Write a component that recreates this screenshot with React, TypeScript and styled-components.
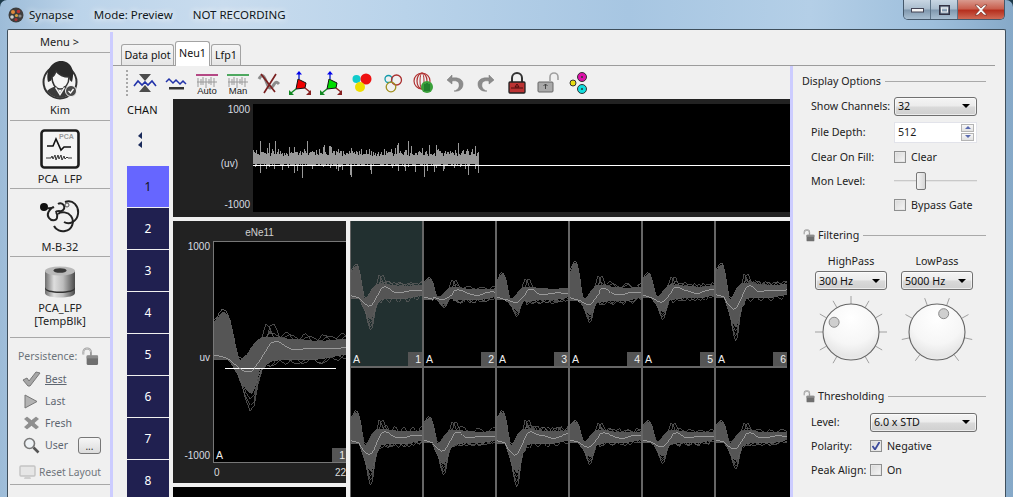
import React from "react";
import styled, { createGlobalStyle } from "styled-components";

const Global = createGlobalStyle`
  html, body { margin: 0; padding: 0; background: #1d3a4a; overflow: hidden; }
  * { box-sizing: border-box; }
`;

const UI_FONT = `"Noto Sans", "Open Sans", sans-serif`;
const PLOT_FONT = `"Liberation Sans", Arial, sans-serif`;

/* ---------- window ---------- */
const Win = styled.div`
  width: 1013px; height: 497px; overflow: hidden; display: flex; flex-direction: column;
  border-radius: 7px 7px 0 0; font-family: ${UI_FONT}; font-size: 11px; color: #1c1c1c;
  background: linear-gradient(90deg, #9dbcd8 0%, #bcd4ea 8%, #c9dcee 22%, #b9d3ea 40%, #a7c6e2 62%, #b4cfe7 80%, #9ebfdc 92%, #86a9c8 100%);
`;
const TitleBar = styled.header`
  height: 29px; flex: none; display: flex; align-items: center; gap: 20px; padding: 0 8px 0 8px;
`;
const TitleBrand = styled.div`display: flex; align-items: center; gap: 5px;`;
const TitleText = styled.span`
  font-size: 11.5px; color: #101820; line-height: 16px; margin-top: 1px;
  text-shadow: 0 0 6px rgba(255,255,255,.95), 0 0 10px rgba(255,255,255,.7);
`;
const Caption = styled.div`
  margin-left: auto; align-self: flex-start; display: flex; width: 102px; height: 20px;
  border: 1px solid #44586b; border-top: none; border-radius: 0 0 5px 5px; overflow: hidden;
`;
const CapBtn = styled.div<{ $w: number; $close?: boolean }>`
  width: ${p => p.$w}px; display: flex; align-items: center; justify-content: center;
  border-right: 1px solid #5d7387;
  background: ${p => p.$close
    ? "linear-gradient(180deg,#d99a8e 0%,#c9604f 45%,#b6301f 55%,#cf6a55 100%)"
    : "linear-gradient(180deg,#c8d6e3 0%,#a9bccd 48%,#7f97ad 52%,#a9bfd2 100%)"};
  &:last-child { border-right: none; }
`;
const Client = styled.div`
  flex: 1; margin: 0 7px; min-height: 0; display: flex; background: #f0f0f0;
  border: 1px solid #3f4f5c; border-bottom: none; border-radius: 2px 2px 0 0;
`;

/* ---------- sidebar ---------- */
const Side = styled.aside`width: 102px; flex: none; padding-left: 2px; display: flex; flex-direction: column;`;
const MenuRow = styled.div`
  height: 23px; flex: none; display: flex; align-items: center; justify-content: center; border-bottom: 1px solid #a8a8a8;
  font-size: 11px; color: #222; padding-right: 1px;
`;
const NavItem = styled.div<{ $h: number; $pad: number }>`
  height: ${p => p.$h}px; flex: none; display: flex; flex-direction: column; align-items: center; justify-content: flex-start;
  padding-top: ${p => p.$pad}px; border-bottom: 1px solid #a8a8a8; text-align: center;
`;
const NavLabel = styled.div`font-size: 11px; line-height: 13px; color: #222; margin-top: 3px;`;
const Persist = styled.div`
  flex: none; padding-top: 6px; height: 147px; border-bottom: 1px solid #a8a8a8; color: #5e6670;
  display: flex; flex-direction: column;
`;
const PersistHead = styled.div`height: 24px; display: flex; align-items: center; gap: 3px; padding-left: 8px; font-size: 10.5px; color: #6c737a;`;
const PersistRow = styled.div`height: 22px; display: flex; align-items: center; padding-left: 11px; gap: 4px; font-size: 10.5px;`;
const IconSlot = styled.span`width: 20px; display: flex; justify-content: center;`;
const PersistLabel = styled.span<{ $on?: boolean }>`
  text-decoration: ${p => p.$on ? "underline" : "none"};
`;
const DotsBtn = styled.span`
  width: 23px; height: 17px; margin-left: 6px; border: 1px solid #777; border-radius: 3px; display: flex; align-items: flex-end; justify-content: center;
  background: linear-gradient(180deg,#f6f6f6,#dcdcdc); font-size: 10px; line-height: 13px; color: #333;
`;
const ResetRow = styled(PersistRow)`margin-top: 5px; padding-left: 7px; gap: 2px; color: #70767c; font-size: 10.3px;`;

const Strip = styled.div<{ $top: number }>`width: 3px; flex: none; background: #ccccff; margin-top: ${p => p.$top}px;`;

/* ---------- content ---------- */
const Content = styled.div`flex: 1; min-width: 0; display: flex; flex-direction: column;`;
const TabRow = styled.div`
  height: 36px; flex: none; padding-left: 8px; margin-right: 10px; display: flex; align-items: flex-end; gap: 1px; border-bottom: 1px solid #9c9c9c;
`;
const Tab = styled.div<{ $w: number; $on?: boolean }>`
  width: ${p => p.$w}px; height: ${p => p.$on ? 25 : 21}px; border: 1px solid #a3a3a3; border-bottom: none; border-radius: 3px 3px 0 0;
  background: ${p => p.$on ? "#fff" : "linear-gradient(180deg,#f5f5f5,#e6e6e6)"}; text-align: center; font-size: 10.7px;
  line-height: ${p => p.$on ? 22 : 20}px; color: #111; margin-bottom: ${p => p.$on ? -1 : 0}px; position: relative;
`;
const Below = styled.div`flex: 1; min-height: 0; display: flex;`;
const Main = styled.main`width: 677px; flex: none; padding-left: 8px; display: flex; flex-direction: column; min-height: 0;`;
const Toolbar = styled.div`
  height: 33px; flex: none; display: flex; align-items: center; padding-left: 5px;
`;
const Grip = styled.span`width: 2px; height: 26px; margin-right: 1px; background: repeating-linear-gradient(180deg,#a8a8a8 0 2px,transparent 2px 4px);`;
const ToolBtn = styled.span`width: 31px; flex: none; display: flex; justify-content: center; align-items: center;`;
const Work = styled.div`flex: 1; min-height: 0; display: flex; overflow: hidden;`;
const ChanCol = styled.div`width: 52px; flex: none; padding-left: 6px; display: flex; flex-direction: column;`;
const ChanHead = styled.div`height: 67px; flex: none; font-size: 11px; padding-top: 3px; line-height: 16px; color: #111; display: flex; flex-direction: column;`;
const ChanArrows = styled.span`margin: 14px 0 0 11px; display: block; line-height: 0;`;
const ChanBtn = styled.div<{ $on?: boolean }>`
  height: 41px; flex: none; margin-bottom: 1px; width: 42px; display: flex; align-items: center; justify-content: center;
  font-size: 12px; background: ${p => p.$on ? "#6666ff" : "#202050"}; color: ${p => p.$on ? "#111" : "#fff"};
`;
const Plots = styled.div`flex: 1; min-width: 0; display: flex; flex-direction: column; gap: 4px; overflow: hidden;`;
const Stream = styled.section`height: 118px; flex: none; background: #222; display: flex; padding: 5px 0;`;
const AxisCol = styled.div<{ $w: number }>`width: ${p => p.$w}px; flex: none; display: flex; flex-direction: column;`;
const AxisLabel = styled.span<{ $top: number; $inset: number }>`
  display: block; height: 12px; margin-top: ${p => p.$top}px; padding-right: ${p => p.$inset}px; text-align: right;
  font: 10px/12px ${PLOT_FONT}; color: #d8dde2;
`;
const StreamPlot = styled.div`flex: 1; background: #000; line-height: 0; overflow: hidden;`;
const Lower = styled.div`flex: 1; min-height: 0; display: flex; gap: 4px;`;
const BigCol = styled.div`width: 173px; flex: none; display: flex; flex-direction: column; gap: 4px;`;
const BigPanel = styled.section`height: 262px; flex: none; background: #222; display: flex; flex-direction: column; overflow: hidden;`;
const BigTitle = styled.div`height: 20px; flex: none; text-align: center; font: 10px/24px ${PLOT_FONT}; color: #d0d0d0;`;
const BigRow = styled.div`height: 222px; flex: none; display: flex;`;
const BigFoot = styled.div`flex: 1; display: flex; justify-content: space-between; padding: 3px 0 0 41px; font: 10px/14px ${PLOT_FONT}; color: #ddd;`;
const BlackFill = styled.div`flex: 1; background: #000;`;
const BigPlot = styled.div`flex: 1; position: relative; background: #000; border: 1px solid #777; border-right: none; line-height: 0;`;
const Grid = styled.div`
  flex: 1; min-width: 0; display: grid; grid-template-columns: repeat(6, 71px); grid-auto-rows: 145px; gap: 2px; align-content: start;
  background: #666; padding: 0 0 0 1px; border-right: 3px solid #000; overflow: hidden;
`;
const Cell = styled.div<{ $on?: boolean }>`position: relative; background: ${p => p.$on ? "#223030" : "#000"}; line-height: 0; overflow: hidden;`;
const CellTag = styled.span`position: absolute; left: 2px; bottom: 1px; font: 10.5px/12px ${PLOT_FONT}; color: #f0f0f0;`;
const CellChip = styled.span`
  position: absolute; right: 0; bottom: 0; width: 14px; height: 14px; background: #555; color: #eee; text-align: right; overflow: hidden;
  font: 10.5px/14px ${PLOT_FONT}; padding-right: 1px;
`;

/* ---------- right panel ---------- */
const Panel = styled.aside`flex: 1; min-width: 0; padding: 8px 19px 0 9px; display: flex; flex-direction: column;`;
const GroupHead = styled.div<{ $top?: number }>`
  height: 14px; flex: none; margin-top: ${p => p.$top ?? 0}px; display: flex; align-items: center; gap: 3px; font-size: 10.7px; line-height: 14px; color: #222;
  &::after { content: ""; flex: 1; height: 1px; background: #a9a9a9; margin-left: 1px; }
`;
const Form = styled.div<{ $cols: string; $rows: string; $top: number }>`
  flex: none; display: grid; grid-template-columns: ${p => p.$cols}; grid-template-rows: ${p => p.$rows}; margin-top: ${p => p.$top}px;
  padding: 0 9px; align-items: center;
`;
const Label = styled.label`font-size: 10.7px; line-height: 14px; color: #222; white-space: nowrap;`;
const Select = styled.div<{ $w?: number }>`
  width: ${p => p.$w ? `${p.$w}px` : "100%"}; height: 19px; border: 1px solid #707070; border-radius: 3px; display: flex; align-items: center; justify-content: space-between;
  padding: 0 6px 0 3px; font-size: 10.7px; color: #111; background: linear-gradient(180deg,#f4f4f4 0%,#ececec 45%,#d9d9d9 55%,#cfcfcf 100%);
  box-shadow: inset 0 0 0 1px rgba(255,255,255,.6);
  &::after { content: ""; border-left: 4px solid transparent; border-right: 4px solid transparent; border-top: 4px solid #000; }
`;
const SpinBox = styled.div`height: 21px; display: flex; align-items: center; justify-content: space-between; padding: 0 2px 0 3px; background: #fff; border: 1px solid #e2e3ea; font-size: 10.7px;`;
const Spin = styled.div`width: 13px; display: flex; flex-direction: column; gap: 1px;`;
const SpinBtn = styled.span<{ $down?: boolean }>`
  height: 8px; border: 1px solid #b4b4b4; background: linear-gradient(180deg,#f8f8f8,#e2e2e2); display: flex; align-items: center; justify-content: center;
  &::after { content: ""; border-left: 3px solid transparent; border-right: 3px solid transparent;
    ${p => p.$down ? "border-top: 3px solid #5a6bb0;" : "border-bottom: 3px solid #5a6bb0;"} }
`;
const CheckRow = styled.div`display: flex; align-items: center; gap: 5px; font-size: 10.7px; line-height: 14px; color: #222;`;
const Box = styled.span`
  width: 12px; height: 12px; flex: none; border: 1px solid #8e8f8f; outline: 1px solid #e6e6e6; outline-offset: -2px; background: linear-gradient(135deg,#d8d8d8,#f6f6f6); display: flex; align-items: center; justify-content: center;
`;
const Slider = styled.div`position: relative; height: 20px; display: flex; align-items: center;`;
const Track = styled.span`flex: 1; height: 2px; background: #c9c9c9; border-bottom: 1px solid #e4e4e4;`;
const Thumb = styled.span`
  position: absolute; left: 22px; top: 1px; width: 10px; height: 18px; border: 1px solid #777; border-radius: 2px; background: linear-gradient(90deg,#f5f5f5,#d6d6d6);
`;
const Dials = styled.div`flex: none; display: flex; gap: 6px; margin-top: 12px; padding-left: 9px;`;
const Dial = styled.div`width: 80px; display: flex; flex-direction: column; align-items: center;`;
const DialTitle = styled.div`height: 14px; font-size: 10.7px; line-height: 14px; color: #222; margin-bottom: 3px;`;
const DialSvg = styled.svg`display: block; margin-top: 2px;`;

/* ---------- waveform drawing ---------- */
const rng = (seed: number) => () => {
  seed |= 0; seed = (seed + 0x6d2b79f5) | 0;
  let t = Math.imul(seed ^ (seed >>> 15), 1 | seed);
  t = (t + Math.imul(t ^ (t >>> 7), 61 | t)) ^ t;
  return ((t ^ (t >>> 14)) >>> 0) / 4294967296;
};
/* t, band top, mean, band bottom: px around the centre line of the large plot */
const KEYS = [
  [0, -29, 4, 8], [0.07, -40, 6, 8], [0.11, -35, 8, 8], [0.19, 10, 17, 25], [0.24, 5, 21, 38], [0.29, -5, 20, 44],
  [0.35, -13, 9, 18], [0.43, -14, -8, 10], [0.48, -14, -10, 9], [0.58, -12, -3, 8], [0.8, -10, -1, 8], [1, -12, -5, 3],
];
const at = (t: number, c: number) => {
  for (let i = 1; i < KEYS.length; i++) {
    if (t <= KEYS[i][0]) {
      const a = KEYS[i - 1], b = KEYS[i], f = (t - a[0]) / (b[0] - a[0]);
      return a[c] + (b[c] - a[c]) * f;
    }
  }
  return KEYS[KEYS.length - 1][c];
};
type Spike = { y: number; up: number; dn: number; tail: number; seed: number };
const shape = (v: number, t: number, s: Spike) => {
  if (v < 0 && t < 0.17) return v * s.up / 43;
  if (v > 0 && t > 0.13 && t < 0.42) return v * s.dn / 61;
  return v * s.tail;
};
const bump = (t: number, c: number, w: number) => Math.exp(-((t - c) * (t - c)) / (2 * w * w));
const Wave: React.FC<{ w: number; h: number; spike: Spike; threshold?: number }> = ({ w, h, spike, threshold }) => {
  const r = rng(spike.seed);
  const N = 66;
  const tops: string[] = [], bots: string[] = [], mean: string[] = [];
  const ph = r() * 6;
  for (let i = 0; i <= N; i++) {
    const t = i / N, x = (t * w).toFixed(1);
    tops.push(`${x},${(spike.y + shape(at(t, 1), t, spike)).toFixed(1)}`);
    bots.unshift(`${x},${(spike.y + shape(at(t, 3), t, spike)).toFixed(1)}`);
    const wig = t > 0.5 ? Math.sin(t * 17 + ph) * 1.2 : 0;
    mean.push(`${x},${(spike.y + shape(at(t, 2), t, spike) + wig).toFixed(1)}`);
  }
  const traces: string[] = [];
  for (let k = 0; k < 11; k++) {
    const a = r() * 6, f = 26 + r() * 26, amp = 2 + r() * 3, side = r() > 0.5;
    const pts: string[] = [];
    for (let i = 0; i <= N; i += 2) {
      const t = i / N;
      const top = at(t, 1), bot = at(t, 3), mid = at(t, 2);
      let v: number, off = 0;
      if (k < 3) {
        v = shape(bot, t, spike) * (1 + (0.15 + k * 0.15) * bump(t, 0.29, 0.05));
      } else if (k < 5) {
        v = shape(mid, t, spike);
        off = -(k === 3 ? 27 : 20) * spike.tail * bump(t, 0.39 + (k - 3) * 0.05, 0.035);
      } else if (k < 7) {
        v = shape(t < 0.16 ? top * 1.08 : mid, t, spike);
      } else {
        v = shape(side ? top : bot, t, spike);
        off = t > 0.42 ? Math.sin(t * f + a) * amp * spike.tail + (side ? -1 : 1) * 2 * spike.tail : 0;
      }
      pts.push(`${(t * w).toFixed(1)},${(spike.y + v + off).toFixed(1)}`);
    }
    traces.push(pts.join(" "));
  }
  return (
    <svg width={w} height={h} viewBox={`0 0 ${w} ${h}`} shapeRendering="crispEdges">
      {traces.map((p, i) => <polyline key={i} points={p} fill="none" stroke="#5c5c5c" strokeWidth={0.8} />)}
      <polygon points={[...tops, ...bots].join(" ")} fill="#555" />
      {threshold !== undefined && <line x1={11} x2={122} y1={threshold} y2={threshold} stroke="#fff" strokeWidth={1} />}
      <polyline points={mean.join(" ")} fill="none" stroke="#aaa" strokeWidth={0.8} />
    </svg>
  );
};
const StreamWave: React.FC = () => {
  const r = rng(77);
  let body = "", spikes = "";
  for (let x = 0; x < 226; x++) {
    const top = 52 - r() * 5 - (r() < 0.25 ? r() * 6 : 0);
    body += `M${x}.5 ${top.toFixed(0)}V${60 + r() * 2 | 0}`;
    if (r() < 0.075) spikes += `M${x}.5 ${(50 - r() * 14).toFixed(0)}V55`;
    if (r() < 0.16) spikes += `M${x}.5 60V${(63 + r() * r() * 13).toFixed(0)}`;
  }
  return (
    <svg width={537} height={108} viewBox="0 0 537 108" shapeRendering="crispEdges">
      <path d={body} stroke="#999" strokeWidth={1} fill="none" />
      <path d={spikes} stroke="#999" strokeWidth={1} fill="none" />
      <line x1={0} x2={537} y1={61.5} y2={61.5} stroke="#fff" strokeWidth={1} />
    </svg>
  );
};

/* ---------- title + sidebar drawings ---------- */
const AppLogo = () => (
  <svg width="16" height="16" viewBox="0 0 16 16">
    <circle cx="8" cy="8" r="7.5" fill="#3d3d3d" />
    <circle cx="5" cy="5" r="2" fill="#e08a3c" /><circle cx="10.5" cy="4.5" r="1.8" fill="#b33" />
    <circle cx="4" cy="10" r="1.8" fill="#cfcfcf" /><circle cx="8.5" cy="8.5" r="1.6" fill="#d6a040" />
    <circle cx="12" cy="9" r="1.6" fill="#888" /><circle cx="8" cy="12.5" r="1.6" fill="#a33" />
  </svg>
);
const KimIcon = () => (
  <svg width="40" height="40" viewBox="0 0 40 40">
    <circle cx="20" cy="22" r="16.5" fill="#f3f3f3" stroke="#333" strokeWidth="2" />
    <path d="M8 22C5 8 14 1 21 1c8 0 15 7 11 21-2-1-3-3-3-5-5 0-11-2-13-6-1 3-3 5-4 7 0 2-1 3-4 4z" fill="#2a2a2a" />
    <path d="M12 17c2-1 3-3 4-6 3 4 8 6 13 6 0 7-4 12-9 12s-8-6-8-12z" fill="#f5f5f5" stroke="#333" strokeWidth="1.5" />
    <path d="M7 31c3-3 7-4 9-5l4 7 4-7c3 1 6 2 9 5-3 4-8 7-13 7s-10-3-13-7z" fill="#3a3a3a" />
    <path d="M16 27l4 6 4-6 1 1-5 8-5-8z" fill="#f3f3f3" />
    <circle cx="31" cy="31" r="5.5" fill="#4a4a4a" stroke="#f3f3f3" />
    <path d="M28.5 31l2 2 3-4" fill="none" stroke="#fff" strokeWidth="1.3" />
  </svg>
);
const PcaIcon = () => (
  <svg width="40" height="40" viewBox="0 0 40 40">
    <rect x="1.5" y="1.5" width="37" height="37" rx="3" fill="#f4f4f4" stroke="#1c1c1c" strokeWidth="2.6" />
    <text x="19" y="10" fontFamily={PLOT_FONT} fontSize="7" fontWeight="700" fill="#9a9a9a">PCA</text>
    <path d="M7 17h6l3-7 5 11 3-3h7" fill="none" stroke="#111" strokeWidth="1.6" />
    <path d="M6 29h5l1-2 1 3 2-4 1 5 2-5 1 4 2-4 1 5 2-4 1 3 2-2 1 1h4" fill="none" stroke="#333" strokeWidth="1" />
  </svg>
);
const MoleculeIcon = () => (
  <svg width="42" height="38" viewBox="0 0 42 38" fill="none" stroke="#222" strokeWidth="2">
    <circle cx="5" cy="8" r="4" fill="#111" stroke="none" />
    <path d="M8 9c3 1 5 0 7-1M14 8c-4 3-7 7-4 11 2 3 7 3 8 0 1-3-1-6-1-6" />
    <path d="M19 5a4 4 0 1 1 1 7c-1 0-3 0-3 1" />
    <path d="M26 3c8-3 14 4 13 12-1 8-9 11-14 8" />
    <path d="M19 15c3-3 10-2 13 2 4 6 1 14-6 15-4 1-9-1-11-5" />
    <circle cx="28" cy="6" r="2" stroke="#555" strokeWidth="1" />
  </svg>
);
const CylinderIcon = () => (
  <svg width="32" height="32" viewBox="0 0 32 32">
    <defs>
      <linearGradient id="cyl" x1="0" x2="1"><stop offset="0" stopColor="#6d6d6d" /><stop offset=".3" stopColor="#dedede" /><stop offset=".6" stopColor="#bdbdbd" /><stop offset="1" stopColor="#4a4a4a" /></linearGradient>
    </defs>
    <path d="M1 5v22c0 3 7 4.500 15 4.500s15-1.500 15-4.500V5z" fill="url(#cyl)" />
    <path d="M1 21c0 3 7 4.500 15 4.500S31 24 31 21v1.500c0 3-7 4.500-15 4.500S1 25.500 1 22.500z" fill="#333" />
    <ellipse cx="16" cy="5" rx="15" ry="4.500" fill="#b9b9b9" />
    <ellipse cx="16" cy="4.500" rx="6.500" ry="2.300" fill="#3a3a3a" />
  </svg>
);
const LockOpen: React.FC<{ s?: number }> = ({ s = 20 }) => (
  <svg width={s} height={s} viewBox="0 0 20 20">
    <path d="M3.500 8V5.500a4 4 0 0 1 8 0V9" fill="none" stroke="#9a9a9a" strokeWidth="2" />
    <path d="M3.500 8V5.500a4 4 0 0 1 8 0" fill="none" stroke="#dcdcdc" strokeWidth=".7" />
    <rect x="7" y="9" width="12" height="10" rx="1.500" fill="#6f6f6f" />
    <rect x="7" y="9" width="12" height="3" fill="#8c8c8c" />
  </svg>
);
const CheckIcon = () => (
  <svg width="19" height="16" viewBox="0 0 19 16"><path d="M1 9l4-2 2 3 7-9 4 1-10 13H6z" fill="#a6a6a6" stroke="#777" /></svg>
);
const PlayIcon = () => (
  <svg width="14" height="15" viewBox="0 0 14 15"><path d="M1 1l12 6.500L1 14z" fill="#b3b3b3" stroke="#777" /></svg>
);
const CrossIcon = () => (
  <svg width="15" height="14" viewBox="0 0 15 14"><path d="M3 1l4.500 3.500L12 1l2.500 2L10 7l4.500 4-2.500 2-4.500-3.500L3 13 .5 11 5 7 .5 3z" fill="#8f8f8f" stroke="#777" strokeWidth=".5" /></svg>
);
const SearchIcon = () => (
  <svg width="17" height="17" viewBox="0 0 17 17"><circle cx="6.500" cy="6.500" r="5" fill="#eef2f5" stroke="#777" strokeWidth="1.600" /><path d="M10.500 10.500l5 5" stroke="#555" strokeWidth="2.600" /></svg>
);
const MonitorIcon = () => (
  <svg width="17" height="15" viewBox="0 0 17 15"><rect x="1" y="1" width="15" height="10" rx="1" fill="#e6e6e6" stroke="#c3c3c3" strokeWidth="1.400" /><path d="M5 14h7l-1-3H6z" fill="#cfcfcf" /></svg>
);

/* ---------- toolbar drawings ---------- */
const I: React.FC<{ children: React.ReactNode }> = ({ children }) => (
  <svg width="24" height="24" viewBox="0 0 24 24" fill="none">{children}</svg>
);
const Spikes: React.FC = () => (
  <path d="M3 7v9M6 8v6M8 6v8M11 7v10M14 8v5M16 6v8M19 7v9M2 11h20" stroke="#9a9a9a" strokeWidth="1" />
);
const Tri: React.FC<{ fill: string }> = ({ fill }) => (
  <I>
    <path d="M10 8l8 4-1 5-9 1z" fill={fill} stroke="#111" strokeWidth="1" />
    <path d="M11 8V3" stroke="#2233cc" strokeWidth="1.500" /><path d="M8 3.500L11 0l3 3.500z" fill="#0000ee" />
    <path d="M8 18l-5 4" stroke="#118822" strokeWidth="1.500" /><path d="M1 19v5h5z" fill="#118822" />
    <path d="M17 17l5 4" stroke="#882222" strokeWidth="1.500" /><path d="M23 19v5h-5z" fill="#882222" />
  </I>
);
const tools = [
  <I key="0"><path d="M6 3h12l-6 7zM6 21h12l-6-7z" fill="#4c4c4c" /><path d="M1 15l4-5 4 4 3-3 3 3 4-4 4 5" stroke="#2233aa" strokeWidth="1.600" /></I>,
  <I key="1"><path d="M2 11l3-3 4 4 3-3 4 4 3-3 3 3" stroke="#2233aa" strokeWidth="1.500" /><rect x="5" y="16" width="15" height="2.500" fill="#333" /></I>,
  <I key="2"><path d="M1 4h22" stroke="#a01060" strokeWidth="1.600" /><Spikes /><text x="12" y="23" textAnchor="middle" fontFamily={PLOT_FONT} fontSize="9.5" fill="#222">Auto</text></I>,
  <I key="3"><path d="M1 4h22" stroke="#189030" strokeWidth="1.600" /><Spikes /><text x="12" y="23" textAnchor="middle" fontFamily={PLOT_FONT} fontSize="9.5" fill="#222">Man</text></I>,
  <I key="4"><path d="M2 8c3-6 5-3 7 2s3 9 6 6 3-7 7-3" stroke="#8c8c8c" strokeWidth="3" /><path d="M4 3l14 18M19 3L7 22" stroke="#7a2020" strokeWidth="1.700" /></I>,
  <Tri key="5" fill="#ee0000" />,
  <Tri key="6" fill="#00dd00" />,
  <I key="7"><circle cx="6.500" cy="8" r="4" fill="#11cccc" /><circle cx="16" cy="8" r="5.500" fill="#ee1111" /><circle cx="10" cy="16" r="5" fill="#eedd00" /></I>,
  <I key="8"><circle cx="7.500" cy="8" r="3.500" stroke="#119aaa" strokeWidth="1.300" /><circle cx="15.500" cy="9" r="5" stroke="#aa3030" strokeWidth="1.300" /><circle cx="10" cy="16" r="4.800" stroke="#a09020" strokeWidth="1.300" /></I>,
  <I key="9"><circle cx="10" cy="10" r="8" stroke="#b03030" strokeWidth="1.200" /><ellipse cx="10" cy="10" rx="5" ry="8" stroke="#b03030" strokeWidth="1.200" /><ellipse cx="10" cy="10" rx="2" ry="8" stroke="#b03030" /><circle cx="15" cy="16" r="6" fill="#3aa03a" /><path d="M13 13v7M15 12v8M17 13v7" stroke="#0d5e20" /></I>,
  <I key="10"><path d="M9 4L4 9l5 4V10c5-1 8 1 7 6-1 2-3 4-5 4 5 1 9-2 9-7 0-4-4-7-11-6z" fill="#8c8c8c" stroke="#777" strokeWidth=".5" /></I>,
  <I key="11"><path d="M15 4l5 5-5 4V10c-5-1-8 1-7 6 1 2 3 4 5 4-5 1-9-2-9-7 0-4 4-7 11-6z" fill="#8c8c8c" stroke="#777" strokeWidth=".5" /></I>,
  <I key="12"><path d="M7 11V7a5 5 0 0 1 10 0v4" stroke="#333" strokeWidth="2" /><rect x="4" y="11" width="16" height="11" rx="1" fill="#bb3333" stroke="#222" strokeWidth="1.300" /><path d="M6 17h12M12 13l-2 3h4z" stroke="#4a0c0c" /></I>,
  <I key="13"><path d="M14 10V6a4 4 0 0 1 8 0v3" stroke="#a0a0a0" strokeWidth="1.600" /><rect x="2" y="11" width="15" height="10" rx="1" fill="#a9a9a9" stroke="#666" /><path d="M9.500 13v5M7.500 15l2-2 2 2" stroke="#444" /></I>,
  <I key="14"><circle cx="15" cy="6" r="4.500" fill="#dd11aa" stroke="#333" /><circle cx="6" cy="12" r="3" fill="#e6dd11" stroke="#333" /><circle cx="15" cy="18" r="4.500" fill="#11dddd" stroke="#333" /><circle cx="15" cy="6" r="1" fill="#333" /><circle cx="15" cy="18" r="1" fill="#333" /></I>,
];

const TICKS_A = [0, 30, 60, 90, 120, 150, -30, -60, -90, -120, -150];
const TICKS_B = [20, 61, 102, 143, -20, -61, -102, -143];
const Knob: React.FC<{ angle: number; id: string; ticks: number[] }> = ({ angle, id, ticks }) => {
  const cx = 40, cy = 40, R = 28, a = angle * Math.PI / 180;
  return (
    <DialSvg width="80" height="80" viewBox="0 0 80 80">
      <defs>
        <radialGradient id={id} cx=".5" cy=".25" r=".85">
          <stop offset="0" stopColor="#fff" /><stop offset=".55" stopColor="#f6f6f6" /><stop offset=".8" stopColor="#e6e6e6" /><stop offset="1" stopColor="#efefef" />
        </radialGradient>
      </defs>
      {ticks.map((t) => {
        const r = (t - 90) * Math.PI / 180;
        return <line key={t} x1={cx + Math.cos(r) * R} y1={cy + Math.sin(r) * R} x2={cx + Math.cos(r) * 36} y2={cy + Math.sin(r) * 36} stroke="#a0a0a0" />;
      })}
      <circle cx={cx} cy={cy} r={R} fill={`url(#${id})`} stroke="#666" strokeWidth="1.100" />
      <circle cx={cx + Math.sin(a) * 19.500} cy={cy - Math.cos(a) * 19.500} r="5" fill="#cfcfcf" stroke="#8a8a8a" />
    </DialSvg>
  );
};

const Check = () => (
  <svg width="10" height="10" viewBox="0 0 10 10"><path d="M1.500 5l2.500 3.500L8.500 1" fill="none" stroke="#3b4a9c" strokeWidth="1.800" /></svg>
);

const row1: Spike[] = [
  { y: 72, up: 30, dn: 38, tail: 0.65, seed: 11 }, { y: 74, up: 18, dn: 13, tail: 0.55, seed: 12 }, { y: 74, up: 23, dn: 22, tail: 0.6, seed: 13 },
  { y: 74, up: 35, dn: 28, tail: 0.7, seed: 14 }, { y: 72, up: 21, dn: 27, tail: 0.6, seed: 15 }, { y: 71, up: 30, dn: 50, tail: 0.65, seed: 16 },
];
const row2: Spike[] = [
  { y: 70, up: 28, dn: 48, tail: 0.65, seed: 21 }, { y: 70, up: 22, dn: 38, tail: 0.6, seed: 22 }, { y: 70, up: 28, dn: 50, tail: 0.65, seed: 23 },
  { y: 70, up: 18, dn: 27, tail: 0.55, seed: 24 }, { y: 70, up: 18, dn: 26, tail: 0.55, seed: 25 }, { y: 70, up: 18, dn: 32, tail: 0.55, seed: 26 },
];
const channels = [1, 2, 3, 4, 5, 6, 7, 8];

export default function App() {
  return (
    <Win>
      <Global />
      <TitleBar>
        <TitleBrand><AppLogo /><TitleText>Synapse</TitleText></TitleBrand>
        <TitleText>Mode: Preview</TitleText>
        <TitleText>NOT RECORDING</TitleText>
        <Caption>
          <CapBtn $w={27}><svg width="13" height="7"><rect x=".5" y="2.500" width="12" height="3.500" fill="#f4f4f4" stroke="#445" /></svg></CapBtn>
          <CapBtn $w={27}><svg width="11" height="10"><rect x=".75" y=".75" width="9.500" height="8.500" fill="none" stroke="#334" strokeWidth="1.500" /><rect x="2.500" y="3" width="6" height="4" fill="none" stroke="#eee" /></svg></CapBtn>
          <CapBtn $w={46} $close><svg width="16" height="12"><path d="M2 1h3l3 3 3-3h3l-4.500 5L14 11h-3L8 8l-3 3H2l4.500-5z" fill="#f6f6f6" stroke="#6b2a20" strokeWidth=".6" /></svg></CapBtn>
        </Caption>
      </TitleBar>
      <Client>
        <Side>
          <MenuRow>Menu &gt;</MenuRow>
          <NavItem $h={68} $pad={7}><KimIcon /><NavLabel>Kim</NavLabel></NavItem>
          <NavItem $h={68} $pad={8}><PcaIcon /><NavLabel>PCA&nbsp; LFP</NavLabel></NavItem>
          <NavItem $h={68} $pad={10}><MoleculeIcon /><NavLabel>M-B-32</NavLabel></NavItem>
          <NavItem $h={81} $pad={9}><CylinderIcon /><NavLabel>PCA_LFP<br />[TempBlk]</NavLabel></NavItem>
          <Persist>
            <PersistHead>Persistence:<LockOpen s={19} /></PersistHead>
            <PersistRow><IconSlot><CheckIcon /></IconSlot><PersistLabel $on>Best</PersistLabel></PersistRow>
            <PersistRow><IconSlot><PlayIcon /></IconSlot><PersistLabel>Last</PersistLabel></PersistRow>
            <PersistRow><IconSlot><CrossIcon /></IconSlot><PersistLabel>Fresh</PersistLabel></PersistRow>
            <PersistRow><IconSlot><SearchIcon /></IconSlot><PersistLabel>User</PersistLabel><DotsBtn>...</DotsBtn></PersistRow>
            <ResetRow><IconSlot><MonitorIcon /></IconSlot><PersistLabel>Reset Layout</PersistLabel></ResetRow>
          </Persist>
        </Side>
        <Strip $top={2} />
        <Content>
          <TabRow>
            <Tab $w={53}>Data plot</Tab>
            <Tab $w={35} $on>Neu1</Tab>
            <Tab $w={30}>Lfp1</Tab>
          </TabRow>
          <Below>
            <Main>
              <Toolbar>
                <Grip />
                {tools.map((t, i) => <ToolBtn key={i}>{t}</ToolBtn>)}
              </Toolbar>
              <Work>
                <ChanCol>
                  <ChanHead>
                    CHAN
                    <ChanArrows><svg width="5" height="16" viewBox="0 0 5 16"><path d="M4 0v7L0 4zM4 9v7l-4-3z" fill="#1a2a5a" /></svg></ChanArrows>
                  </ChanHead>
                  {channels.map((n, i) => <ChanBtn key={n} $on={i === 0}>{n}</ChanBtn>)}
                </ChanCol>
                <Plots>
                  <Stream>
                    <AxisCol $w={80}>
                      <AxisLabel $top={0} $inset={3}>1000</AxisLabel>
                      <AxisLabel $top={42} $inset={15}>(uv)</AxisLabel>
                      <AxisLabel $top={29} $inset={3}>-1000</AxisLabel>
                    </AxisCol>
                    <StreamPlot><StreamWave /></StreamPlot>
                  </Stream>
                  <Lower>
                    <BigCol>
                      <BigPanel>
                        <BigTitle>eNe11</BigTitle>
                        <BigRow>
                          <AxisCol $w={40}>
                            <AxisLabel $top={0} $inset={3}>1000</AxisLabel>
                            <AxisLabel $top={99} $inset={3}>uv</AxisLabel>
                            <AxisLabel $top={86} $inset={3}>-1000</AxisLabel>
                          </AxisCol>
                          <BigPlot>
                            <Wave w={132} h={220} spike={{ y: 109, up: 43, dn: 61, tail: 1, seed: 5 }} threshold={126} />
                            <CellTag>A</CellTag>
                            <CellChip>1</CellChip>
                          </BigPlot>
                        </BigRow>
                        <BigFoot><span>0</span><span>22</span></BigFoot>
                      </BigPanel>
                      <BlackFill />
                    </BigCol>
                    <Grid>
                      {row1.map((s, i) => (
                        <Cell key={s.seed} $on={i === 0}>
                          <Wave w={71} h={145} spike={s} />
                          <CellTag>A</CellTag>
                          <CellChip>{i + 1}</CellChip>
                        </Cell>
                      ))}
                      {row2.map((s) => (
                        <Cell key={s.seed}><Wave w={71} h={145} spike={s} /></Cell>
                      ))}
                    </Grid>
                  </Lower>
                </Plots>
              </Work>
            </Main>
            <Strip $top={0} />
            <Panel>
              <GroupHead>Display Options</GroupHead>
              <Form $cols="83px 83px" $rows="26px 26px 24px 24px 24px" $top={5}>
                <Label>Show Channels:</Label><Select>32</Select>
                <Label>Pile Depth:</Label>
                <SpinBox>512<Spin><SpinBtn /><SpinBtn $down /></Spin></SpinBox>
                <Label>Clear On Fill:</Label><CheckRow><Box />Clear</CheckRow>
                <Label>Mon Level:</Label><Slider><Track /><Thumb /></Slider>
                <span /><CheckRow><Box />Bypass Gate</CheckRow>
              </Form>
              <GroupHead $top={11}><LockOpen s={13} />Filtering</GroupHead>
              <Dials>
                <Dial><DialTitle>HighPass</DialTitle><Select $w={72}>300 Hz</Select><Knob angle={-60} id="k1" ticks={TICKS_A} /></Dial>
                <Dial><DialTitle>LowPass</DialTitle><Select $w={72}>5000 Hz</Select><Knob angle={20} id="k2" ticks={TICKS_B} /></Dial>
              </Dials>
              <GroupHead $top={17}><LockOpen s={13} />Thresholding</GroupHead>
              <Form $cols="59px 107px" $rows="24px 24px 24px" $top={7}>
                <Label>Level:</Label><Select>6.0 x STD</Select>
                <Label>Polarity:</Label><CheckRow><Box><Check /></Box>Negative</CheckRow>
                <Label>Peak Align:</Label><CheckRow><Box />On</CheckRow>
              </Form>
            </Panel>
          </Below>
        </Content>
      </Client>
    </Win>
  );
}
